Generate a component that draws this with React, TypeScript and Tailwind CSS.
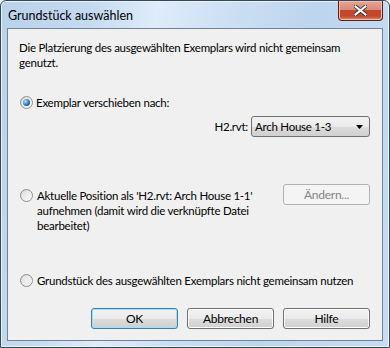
import React from "react";

const FONT = "font-['Lato','Liberation_Sans',sans-serif]";

function Radio({ checked }: { checked?: boolean }) {
  return (
    <span className="relative flex h-[13px] w-[13px] shrink-0 items-center justify-center rounded-full border border-[#8e8f8f] bg-[linear-gradient(135deg,#d4d4d4,#ffffff)]">
      <span className="h-[9px] w-[9px] rounded-full bg-[linear-gradient(135deg,#e3e3e3,#f7f7f7)]" />
      {checked ? (
        <span className="absolute left-[2px] top-[2px] h-[7px] w-[7px] rounded-full bg-[radial-gradient(circle_at_35%_35%,#b6e3ff,#1a6eb5_60%,#0c4a85)]" />
      ) : null}
    </span>
  );
}

function Button({
  label,
  primary,
  disabled,
}: {
  label: string;
  primary?: boolean;
  disabled?: boolean;
}) {
  const base =
    "flex h-[21px] w-[87px] shrink-0 items-center justify-center whitespace-nowrap rounded-[3px] border text-[12px]";
  if (disabled) {
    return <div className={`${base} border-[#adb2b5] bg-[#f4f4f4] text-[#838383]`}>{label}</div>;
  }
  return (
    <div
      className={`${base} ${
        primary
          ? "border-[#3c7fb1] shadow-[inset_0_0_0_1px_#9fe1f9]"
          : "border-[#707070] shadow-[inset_0_0_0_1px_#fcfcfc]"
      } bg-[linear-gradient(#f2f2f2_0%,#ebebeb_50%,#dddddd_51%,#cfcfcf_100%)] text-black`}
    >
      {label}
    </div>
  );
}

export default function App() {
  return (
    <div className={`h-[348px] w-[390px] bg-white ${FONT} text-[11.5px] leading-[15px] tracking-[-0.25px] text-black`}>
      <div className="flex h-full w-full flex-col rounded-t-[6px] border border-[#37475a] bg-[linear-gradient(100deg,#b9d1ea_0%,#c4daf1_20%,#dfecf9_35%,#cde0f4_50%,#bdd5ee_70%,#c7dcf2_100%)] shadow-[inset_0_0_0_1px_#eaf2fb]">
        {/* title bar */}
        <div className="flex h-[27px] shrink-0 items-start justify-between">
          <span className="ml-[7px] mt-[7px] text-[12.5px] tracking-normal text-black">Grundstück auswählen</span>
          <div className="mr-[6px] flex h-[20px] w-[45px] items-center justify-center rounded-b-[4px] border border-t-0 border-[#5a1e16] bg-[linear-gradient(#e8a493_0%,#d98c78_45%,#c4452c_50%,#c1492f_80%,#da8a6c_100%)] shadow-[inset_0_0_0_1px_#f0c0b0]">
            <svg width="13" height="11" viewBox="0 0 13 11">
              <path
                d="M1.5 1.5 L11.5 9.5 M11.5 1.5 L1.5 9.5"
                stroke="#3b3b3b"
                strokeWidth="4"
                strokeLinecap="square"
              />
              <path
                d="M1.5 1.5 L11.5 9.5 M11.5 1.5 L1.5 9.5"
                stroke="#ffffff"
                strokeWidth="2"
                strokeLinecap="square"
              />
            </svg>
          </div>
        </div>

        {/* client area */}
        <div className="mx-[6px] flex h-[313px] flex-col whitespace-nowrap border border-[#6f8497] bg-[#f0f0f0] pl-[11px] pr-[12px] pt-[11px]">
          <p>
            Die Platzierung des ausgewählten Exemplars wird nicht gemeinsam
            <br />
            genutzt.
          </p>

          <div className="mt-[25px] flex items-center gap-[3px] pl-[1px]">
            <Radio checked />
            <span>Exemplar verschieben nach:</span>
          </div>

          <div className="mt-[6px] flex items-center justify-end gap-[3px]">
            <span>H2.rvt:</span>
            <div className="flex h-[21px] w-[119px] items-center justify-between rounded-[3px] border border-[#707070] bg-[linear-gradient(#f2f2f2_0%,#ebebeb_50%,#dddddd_51%,#cfcfcf_100%)] pl-[3px] pr-[6px]">
              <span>Arch House 1-3</span>
              <svg width="7" height="4" viewBox="0 0 7 4">
                <path d="M0 0 H7 L3.5 4 Z" fill="#000" />
              </svg>
            </div>
          </div>

          <div className="mt-[51px] flex items-start justify-between">
            <div className="flex items-start gap-[4px] pl-[1px]">
              <span className="mt-[1px]">
                <Radio />
              </span>
              <p>
                Aktuelle Position als 'H2.rvt: Arch House 1-1'
                <br />
                aufnehmen (damit wird die verknüpfte Datei
                <br />
                bearbeitet)
              </p>
            </div>
            <div className="-mt-[4px]">
              <Button label="Ändern..." disabled />
            </div>
          </div>

          <div className="mt-[40px] flex items-center gap-[4px] pl-[1px]">
            <Radio />
            <span>Grundstück des ausgewählten Exemplars nicht gemeinsam nutzen</span>
          </div>

          <div className="mt-[20px] flex justify-end gap-[9px]">
            <Button label="OK" primary />
            <Button label="Abbrechen" />
            <Button label="Hilfe" />
          </div>
        </div>
      </div>
    </div>
  );
}
